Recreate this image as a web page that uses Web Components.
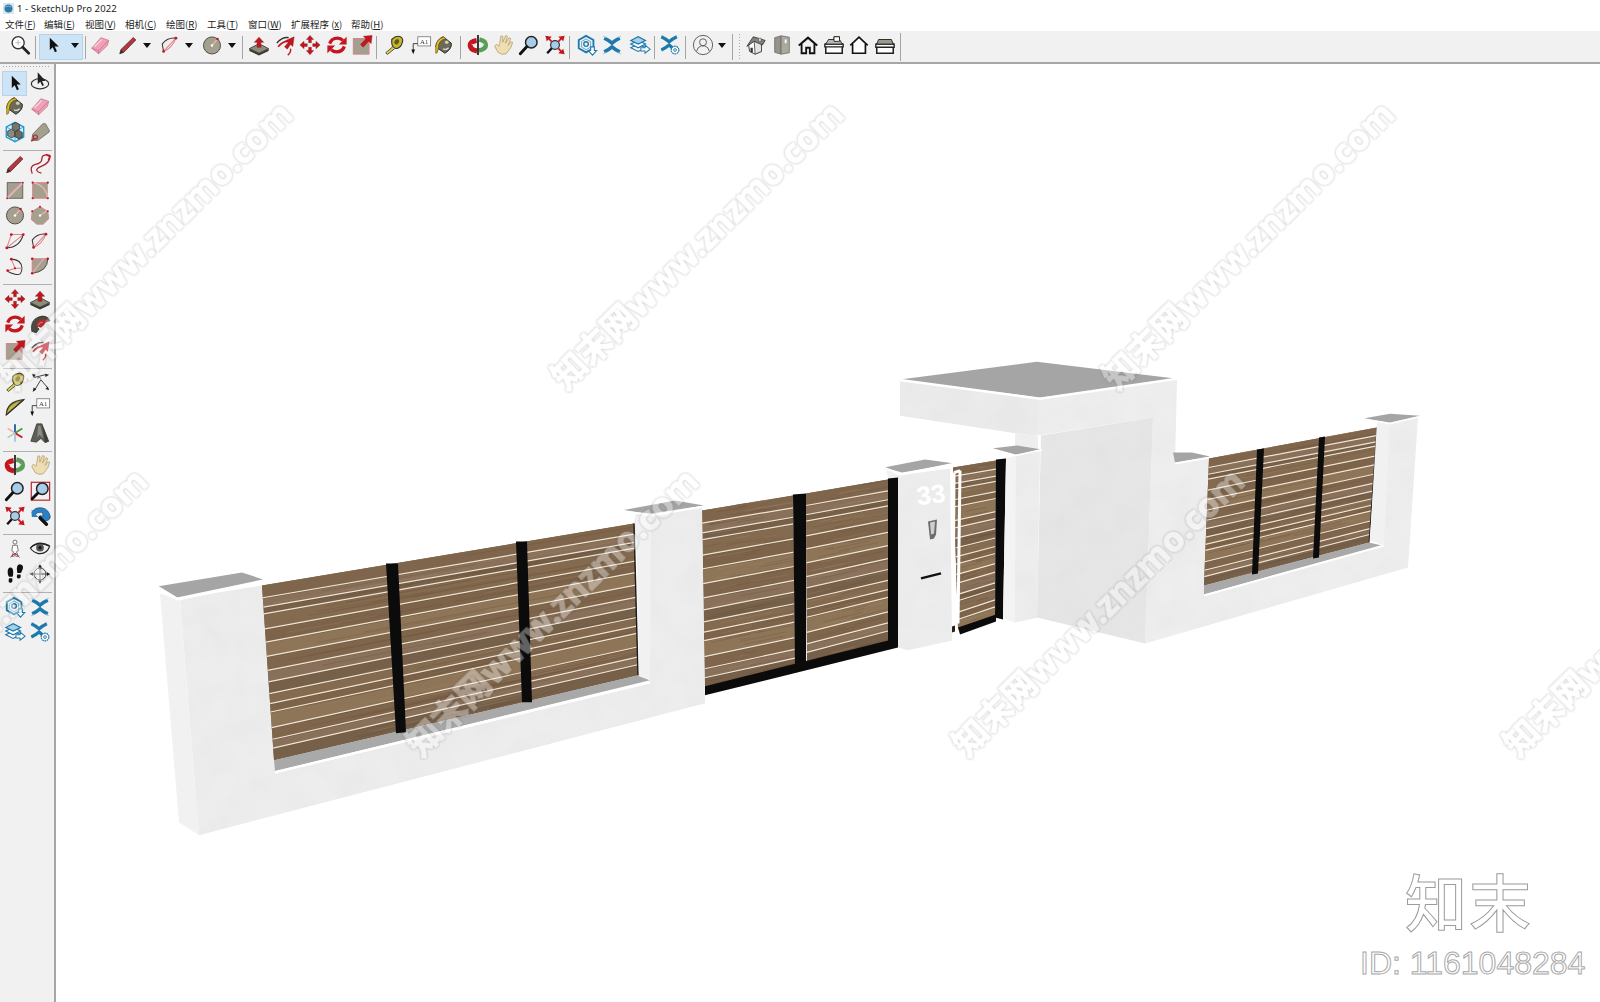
<!DOCTYPE html>
<html>
<head>
<meta charset="utf-8">
<title>1 - SketchUp Pro 2022</title>
<style>
  html, body { margin: 0; height: 100%; background: #fff; }
</style>
</head>
<body>
<su-app>
  <su-titlebar slot="title">1 - SketchUp Pro 2022</su-titlebar>
  <su-menubar slot="menu">
    <su-menu style="--w:39px">文件(<u>F</u>)</su-menu>
    <su-menu style="--w:41px">编辑(<u>E</u>)</su-menu>
    <su-menu style="--w:40px">视图(<u>V</u>)</su-menu>
    <su-menu style="--w:41px">相机(<u>C</u>)</su-menu>
    <su-menu style="--w:41px">绘图(<u>R</u>)</su-menu>
    <su-menu style="--w:41px">工具(<u>T</u>)</su-menu>
    <su-menu style="--w:43px">窗口(<u>W</u>)</su-menu>
    <su-menu style="--w:60px">扩展程序 (<u>x</u>)</su-menu>
    <su-menu>帮助(<u>H</u>)</su-menu>
  </su-menubar>
  <su-toolbar slot="tools">
    <su-tool icon="search" w="26"></su-tool>
    <su-sep></su-sep>
    <su-split style="margin-left:2px"><su-tool icon="select" w="27"></su-tool><su-drop w="17"></su-drop></su-split>
    <su-sep></su-sep>
    <su-tool icon="eraser" w="26"></su-tool>
    <su-tool icon="pencil" w="30"></su-tool><su-drop w="8"></su-drop>
    <su-tool icon="arc3" w="30" style="margin-left:4px"></su-tool><su-drop w="8"></su-drop>
    <su-tool icon="circle" w="30" style="margin-left:4px"></su-tool><su-drop w="8" style="margin-left:1px"></su-drop>
    <su-sep style="margin-left:4px"></su-sep>
    <su-tool icon="pushpull" w="26" style="margin-left:2px"></su-tool>
    <su-tool icon="followme" w="26"></su-tool>
    <su-tool icon="move" w="24"></su-tool>
    <su-tool icon="rotate" w="30"></su-tool>
    <su-tool icon="scale" w="20"></su-tool>
    <su-sep style="margin-left:2px"></su-sep>
    <su-tool icon="tape" w="28" style="margin-left:2px"></su-tool>
    <su-tool icon="text" w="26"></su-tool>
    <su-tool icon="paint" w="20"></su-tool>
    <su-sep style="margin-left:4px"></su-sep>
    <su-tool icon="orbit" w="26" style="margin-left:3px"></su-tool>
    <su-tool icon="pan" w="24"></su-tool>
    <su-tool icon="zoom" w="28"></su-tool>
    <su-tool icon="zoomext" w="24"></su-tool>
    <su-sep></su-sep>
    <su-tool icon="hexdown" w="26" style="margin-left:3px"></su-tool>
    <su-tool icon="chevrons" w="24"></su-tool>
    <su-tool icon="layers" w="24" style="margin-left:4px"></su-tool>
    <su-sep></su-sep>
    <su-tool icon="chevcog" w="26" style="margin-left:1px"></su-tool>
    <su-sep></su-sep>
    <su-tool icon="user" w="28" style="margin-left:2px"></su-tool><su-drop w="8" style="margin-left:1px"></su-drop>
    <su-sep style="margin-left:4px;--h:26px"></su-sep>
    <su-grip style="margin-left:5px"></su-grip>
    <su-tool icon="iso" w="26" style="margin-left:3px"></su-tool>
    <su-tool icon="door" w="26"></su-tool>
    <su-tool icon="home" w="26"></su-tool>
    <su-tool icon="top" w="25"></su-tool>
    <su-tool icon="front" w="26"></su-tool>
    <su-tool icon="back" w="26"></su-tool>
    <su-sep style="--h:28px"></su-sep>
  </su-toolbar>
  <su-palette slot="palette">
    <su-group>
      <su-tool icon="select" active></su-tool><su-tool icon="lasso"></su-tool>
      <su-tool icon="paint"></su-tool><su-tool icon="eraser"></su-tool>
      <su-tool icon="component"></su-tool><su-tool icon="tag"></su-tool>
    </su-group>
    <su-group>
      <su-tool icon="pencil"></su-tool><su-tool icon="freehand"></su-tool>
      <su-tool icon="rect"></su-tool><su-tool icon="rotrect"></su-tool>
      <su-tool icon="circle"></su-tool><su-tool icon="polygon"></su-tool>
      <su-tool icon="arc"></su-tool><su-tool icon="arc3"></su-tool>
      <su-tool icon="arc3b"></su-tool><su-tool icon="pie"></su-tool>
    </su-group>
    <su-group>
      <su-tool icon="move"></su-tool><su-tool icon="pushpull"></su-tool>
      <su-tool icon="rotate"></su-tool><su-tool icon="offset"></su-tool>
      <su-tool icon="scale"></su-tool><su-tool icon="followme"></su-tool>
    </su-group>
    <su-group>
      <su-tool icon="tape"></su-tool><su-tool icon="dimension"></su-tool>
      <su-tool icon="protractor"></su-tool><su-tool icon="text"></su-tool>
      <su-tool icon="axes"></su-tool><su-tool icon="text3d"></su-tool>
    </su-group>
    <su-group>
      <su-tool icon="orbit"></su-tool><su-tool icon="pan"></su-tool>
      <su-tool icon="zoom"></su-tool><su-tool icon="zoomwin"></su-tool>
      <su-tool icon="zoomext"></su-tool><su-tool icon="prev"></su-tool>
    </su-group>
    <su-group>
      <su-tool icon="person"></su-tool><su-tool icon="eye"></su-tool>
      <su-tool icon="feet"></su-tool><su-tool icon="cross"></su-tool>
    </su-group>
    <su-group last>
      <su-tool icon="hexdown"></su-tool><su-tool icon="chevrons"></su-tool>
      <su-tool icon="layers"></su-tool><su-tool icon="chevcog"></su-tool>
    </su-group>
  </su-palette>
  <su-scene slot="scene"></su-scene>
  <su-watermark slot="overlay"></su-watermark>
</su-app>

<script>
const RED = '#c4161f', DK = '#7d1f25', FACE = '#a5a08e', BLUE = '#1d78ab';
const ICONS = {
  search: `<circle cx="10" cy="9.5" r="6.6" fill="#fff" stroke="#333" stroke-width="1.5"/><path d="M7 9.5h6M10 6.5v6" stroke="#bbb"/><path d="M15 14.5l6.5 6.5" stroke="#222" stroke-width="3" stroke-linecap="round"/>`,
  select: `<path d="M8.5 4v13.5l3.2-3 2.4 5.3 2.2-1-2.4-5.2h4.4z" fill="#111"/>`,
  lasso: `<ellipse cx="12" cy="15" rx="9.5" ry="5.5" fill="none" stroke="#333" stroke-width="1.3"/><path d="M9.5 2.5v13l2.8-2.7 2.2 4.6 1.8-.9-2.1-4.5h3.8z" fill="#222"/>`,
  eraser: `<path d="M3 15.5L13 4l8.5 3-1.5 5.5-9.5 9z" fill="#f2a0b6" stroke="#b87388" stroke-width=".8"/><path d="M3 15.5l7.5 2.7 10.5-11" fill="none" stroke="#c97a92"/><path d="M10.5 18.2v3.3" stroke="#b87388"/><path d="M6 14l8-8" stroke="#f9cfd9" stroke-width="1.6"/>`,
  pencil: `<path d="M3 21.5l1.4-4.600L17.800 3.800l2.700 2.700L7.400 20z" fill="#b03a40" stroke="#5c1418" stroke-width=".8"/><path d="M3 21.5l1.4-4.600 3 3z" fill="#333"/>`,
  arc3: `<path d="M5 19L3.5 11Q9 3.5 18 4.5z" fill="#f5e4e4" fill-opacity=".6" stroke="none"/><path d="M5 19Q14 16 18.5 4.5" fill="none" stroke="#d9808a" stroke-width="1.1"/><path d="M5 19L3.5 11Q9 3.5 18.5 4.5" fill="none" stroke="#333" stroke-width="1.1"/><path d="M5 19L18.5 4.5" stroke="#d9808a" stroke-width="1.1"/><g fill="${RED}"><circle cx="5" cy="19" r="1.5"/><circle cx="18.5" cy="4.5" r="1.5"/></g>`,
  arc3b: `<path d="M8 4.5Q19 5 19.5 14T12 21 4 17" fill="none" stroke="#333" stroke-width="1.1"/><path d="M8 4.5l4 10-8 3M12 14.500l8 0" fill="none" stroke="#d9808a" stroke-width="1.1"/><g fill="${RED}"><circle cx="8" cy="4.500" r="1.500"/><circle cx="4" cy="17" r="1.500"/><circle cx="12" cy="14.500" r="1.200"/></g>`,
  arc: `<path d="M3 19.500Q17 19 21 5" fill="none" stroke="#333" stroke-width="1.200"/><path d="M3 19.500L8 5h13.500M3 19.500L21 5" fill="none" stroke="#d9808a" stroke-width="1.100"/><g fill="${RED}"><circle cx="3" cy="19.500" r="1.500"/><circle cx="8" cy="5" r="1.500"/><circle cx="21" cy="5" r="1.500"/></g>`,
  pie: `<path d="M3.500 20V4h17q0 14-17 16z" fill="${FACE}"/><path d="M3.500 20V4h17" fill="none" stroke="#d9808a" stroke-width="1.100"/><path d="M3.500 20q17-2 17-16" fill="none" stroke="#444" stroke-width="1"/><path d="M3.500 20L16 4" stroke="#e8a8ae" stroke-width="1.600"/><g fill="${RED}"><circle cx="3.500" cy="20" r="1.400"/><circle cx="20.500" cy="4" r="1.400"/><circle cx="3.500" cy="4" r="1.400"/></g>`,
  circle: `<circle cx="12" cy="12.500" r="9.300" fill="${FACE}" stroke="#444" stroke-width="1"/><path d="M12 12.500L18 5.500" stroke="#e9b3b7" stroke-width="1.500"/><circle cx="12" cy="12.500" r="1.300" fill="#fff"/><circle cx="18" cy="5.500" r="1.400" fill="${RED}"/>`,
  polygon: `<path d="M12 3l8.500 5 1 8-6 6h-7l-6-5 1-9z" fill="${FACE}" stroke="#c9888f" stroke-width="1"/><path d="M12 12.500L20 7" stroke="#e9b3b7" stroke-width="1.400"/><circle cx="12" cy="12.500" r="1.300" fill="#fff"/><g fill="${RED}"><circle cx="12" cy="3" r="1.100"/><circle cx="20.500" cy="8" r="1.100"/><circle cx="3.500" cy="8" r="1.100"/></g>`,
  rect: `<rect x="3.500" y="4" width="17" height="17" fill="${FACE}" stroke="#555" stroke-width=".9"/><path d="M3.500 21L20.500 4" stroke="#eab2b6" stroke-width="2"/><g fill="${RED}"><circle cx="3.500" cy="21" r="1"/><circle cx="20.500" cy="4" r="1"/></g>`,
  rotrect: `<rect x="4" y="4" width="16.500" height="17" fill="${FACE}"/><path d="M4 4v17h16.500M4 4h16.500" fill="none" stroke="#d9808a"/><path d="M4 4Q18 6 20.500 21" fill="none" stroke="#eab2b6" stroke-width="1.600"/><g fill="${RED}"><circle cx="4" cy="4" r="1.200"/><circle cx="20.500" cy="4" r="1.200"/><circle cx="4" cy="21" r="1.200"/><circle cx="20.500" cy="21" r="1.200"/></g>`,
  freehand: `<path d="M3.500 22.500Q0 14 7 12.500t7-6T19.500 2t3 4q-1 5-8 8t-6 5 5 3" fill="none" stroke="#a42732" stroke-width="1.400"/><path d="M18.500 1.500l4 2.500-1.500 3.500" fill="none" stroke="${RED}" stroke-width="1.300"/>`,
  pushpull: `<path d="M1.500 16l10.500-5.500L22.500 16 12 21z" fill="#8f8b78" stroke="#333" stroke-width=".9"/><path d="M1.500 16v2.500L12 23.500l10.500-5V16L12 21z" fill="#3a3a34"/><path d="M12 3.500l5 5.500h-3v5.500h-4V9H7z" fill="${RED}" stroke="#7a0f15" stroke-width=".5"/>`,
  followme: `<path d="M3 10Q9 3 16 4" fill="none" stroke="#333" stroke-width="1.500"/><path d="M4.500 14Q9 8 15 8" fill="none" stroke="${RED}" stroke-width="1.800"/><path d="M18 16q1 4-3 7" fill="none" stroke="${RED}" stroke-width="1.500"/><path d="M22 3l-1.500 10.500-2.500-2-3.500 5-3-2.500 4-4.800-2.700-2z" fill="${RED}" stroke="#7a0f15" stroke-width=".4"/>`,
  move: `<g fill="${RED}" stroke="#7a0f15" stroke-width=".4"><path d="M12 1.500l4 4.500h-2.500v3.500h-3V6H8z"/><path d="M12 22.500l4-4.500h-2.500v-3.500h-3V18H8z"/><path d="M1 12l4.500-4V10.500H9v3H5.500V16z"/><path d="M23 12l-4.500-4V10.500H15v3h3.500V16z"/></g>`,
  rotate: `<g fill="none" stroke="${RED}" stroke-width="3.600"><path d="M4 10.500Q6 4.500 12.500 4.500 16 4.500 18.500 7"/><path d="M20 13.500Q18 19.500 11.500 19.500 8 19.500 5.500 17"/></g><path d="M22.500 3v8.500h-8.500z" fill="${RED}"/><path d="M1.500 21v-8.500h8.500z" fill="${RED}"/>`,
  scale: `<rect x="2.500" y="5" width="17" height="17" fill="${FACE}" stroke="#c9888f"/><path d="M2.500 5h17v17" fill="none" stroke="#d9808a"/><path d="M23 1.500l-1 9-2.700-2.500-6 6.500-3-3 6-6.300-2.800-2.700z" fill="${RED}" stroke="#7a0f15" stroke-width=".4"/>`,
  tape: `<path d="M9.500 6q5-5 9.500-3t1 9q-3 5-7 3.500t-3.500-9.500z" fill="#c5b62a" stroke="#333" stroke-width="1.200"/><ellipse cx="15" cy="8.500" rx="2.300" ry="3.100" transform="rotate(35 15 8.500)" fill="#5f5a1a"/><path d="M10.500 14L3 20.500l1.800 1.800 7.500-6" fill="#e0d24a" stroke="#333" stroke-width=".9"/>`,
  text: `<rect x="8.500" y="3" width="14" height="10" fill="#fff" stroke="#777" stroke-width=".9"/><text x="15.500" y="11" font-family="Liberation Serif,serif" font-size="7.500" text-anchor="middle" fill="#333">A1</text><path d="M8.500 10.500H3.500v7" fill="none" stroke="#333"/><path d="M3.500 22L1.500 17h4z" fill="#111"/>`,
  text3d: `<path d="M8.500 2h5.500l7.500 19-4 1.500-4.500-4.500-5 4-6-1z" fill="#5e5e58" stroke="#2a2a2a" stroke-width=".7"/><path d="M10 4h2.500l3 14-4-4-2.500 3z" fill="#8c8c84"/><path d="M14 2l7.500 19-4 1.500z" fill="#3f3f3a"/>`,
  paint: `<path d="M3 14Q4 6 11 3l9 7q1 6-7 11z" fill="#6b6a58" stroke="#222" stroke-width="1"/><path d="M3 14q0-8 9-11l2 2q-8 2-8 9-1 8-3 7z" fill="#e2bd1f" stroke="#554812" stroke-width=".7"/><circle cx="15" cy="9" r="2" fill="#cfcbb5"/><path d="M11 16q3 2 6-1" stroke="#ddd" fill="none" stroke-width="1.300"/>`,
  orbit: `<path d="M10.500 7Q3.500 8 3.500 12.500t7.500 6" fill="none" stroke="${RED}" stroke-width="5.500"/><path d="M13.500 6Q20.500 7.500 20.500 12t-7.500 6" fill="none" stroke="#5a9d58" stroke-width="5"/><path d="M5 11q7 3.500 14 0" fill="none" stroke="#e8e8e8" stroke-width=".9"/><path d="M12 1v22" stroke="#111" stroke-width="1.800"/>`,
  pan: `<path d="M3 13.500l3.500 6.500q4 3.500 9 1.500l5-6.500 2-6-1.800-.5-3.200 4 3-7.500-1.900-1-3.800 6 2-7.500-2-.8-3 7.300 0-6.500-2-.5-1.500 8.500-.8 3-2.500-2.500z" fill="#efdeb4" stroke="#b5a273" stroke-width=".9"/>`,
  zoom: `<circle cx="14.500" cy="9" r="6.300" fill="#a8cbe8" stroke="#222" stroke-width="1.600"/><path d="M9.500 14l-7 7.500" stroke="#111" stroke-width="3.200" stroke-linecap="round"/>`,
  zoomwin: `<rect x="2.500" y="2.500" width="20" height="19.500" fill="none" stroke="#b8272f" stroke-width="1.300"/><circle cx="14.500" cy="9.500" r="6.300" fill="#a8cbe8" stroke="#222" stroke-width="1.600"/><path d="M9.500 14.500l-6 6" stroke="#111" stroke-width="3.200" stroke-linecap="round"/>`,
  zoomext: `<circle cx="12" cy="12" r="4.800" fill="#a8cbe8" stroke="#333" stroke-width="1.300"/><path d="M8.500 15.500l-5 5.500" stroke="#111" stroke-width="2.600"/><g fill="${RED}"><path d="M1.500 2l7 1-2 2 2.500 2.500-1.500 1.500L5 6 3 8z"/><path d="M22.500 2l-7 1 2 2-2.500 2.500 1.500 1.500L19 6l2 2z"/><path d="M22.500 22l-7-1 2-2-2.500-2.500 1.500-1.500L19 18l2-2z"/></g>`,
  prev: `<path d="M3 9Q5 3 12 3t10 6-2 8-7 0-2-4 5-1l-2-4q-5-.5-7 2z" fill="#2c7fc1" stroke="#17517e" stroke-width=".8"/><path d="M3 5v8h7z" fill="#2c7fc1"/><path d="M12 14l7 7" stroke="#111" stroke-width="3.600" stroke-linecap="round"/>`,
  hexdown: `<path d="M11 2l8 4.500v9L11 20l-8-4.500v-9z" fill="none" stroke="${BLUE}" stroke-width="2"/><path d="M11 5.500l5 2.800v6l-5 2.800-5-2.800v-6z" fill="none" stroke="#5aa4cc" stroke-width="1"/><circle cx="11" cy="11" r="2.500" fill="none" stroke="${BLUE}" stroke-width="1.500"/><path d="M16 14h4v4h2.500L18 23l-4.500-5H16z" fill="#fff" stroke="${BLUE}" stroke-width="1.200"/>`,
  chevrons: `<path d="M3.500 4.500Q8 6.500 12 10q4-3.500 8.500-5.500M3.500 19.500Q8 17.500 12 14q4 3.500 8.500 5.500" fill="none" stroke="${BLUE}" stroke-width="3.800"/><path d="M2.500 2.500l3 1.500M21.500 2.500l-3 1.500M2.500 21.500l3-1.500M21.500 21.500l-3-1.500" stroke="#8cc0dc" stroke-width="1"/>`,
  layers: `<g fill="#fff" stroke="${BLUE}" stroke-width="1.300"><path d="M2 15l8-4 8 4-8 4z"/><path d="M2 11l8-4 8 4-8 4z"/><path d="M2 7l8-4 8 4-8 4z" fill="#a8d0e6"/></g><path d="M13 15h4.500v-3l5.500 4.500L17.500 21v-2.500H13z" fill="#fff" stroke="${BLUE}" stroke-width="1.100"/>`,
  chevcog: `<path d="M2.500 3Q7 5 11 8.500 15 5 19.500 3M2.500 17.500Q7 15.500 11 12q4 3.500 6 4.500" fill="none" stroke="${BLUE}" stroke-width="3.400"/><circle cx="17.500" cy="17.500" r="4.200" fill="#fff" stroke="${BLUE}" stroke-width="1.300" stroke-dasharray="2 .6"/><circle cx="17.500" cy="17.500" r="1.500" fill="none" stroke="${BLUE}"/>`,
  user: `<circle cx="12" cy="12" r="10.500" fill="none" stroke="#555" stroke-width="1"/><circle cx="12" cy="9" r="3.800" fill="none" stroke="#555" stroke-width="1"/><path d="M5 19q1-5 5-6h4q4 1 5 6" fill="none" stroke="#555" stroke-width="1"/>`,
  iso: `<path d="M4 12l6-5 8 1.500V19l-7 3-6-3z" fill="#fff" stroke="#333" stroke-width="1"/><path d="M10 7l8 1.500V19l-7 3z" fill="#e4e4e0" stroke="#333" stroke-width=".8"/><path d="M2 13.500L9 3l13 4-3 5-9-4z" fill="#84817a" stroke="#333" stroke-width=".9"/><path d="M15 4.500h2.500V8H15z" fill="#f3f3f3" stroke="#444" stroke-width=".6"/><path d="M6 15h2.500v5.500L6 19.500z" fill="#333"/>`,
  door: `<path d="M4 4l7-2v20l-7-2z" fill="#96938a" stroke="#666" stroke-width=".8"/><path d="M11 2l9 1.500v17L11 22z" fill="#aba89e" stroke="#666" stroke-width=".8"/><path d="M15 6h2v4h-2z" fill="#fff"/>`,
  home: `<path d="M2 12.500L12 4l10 8.500" fill="none" stroke="#111" stroke-width="2.200"/><path d="M5 11v10h5v-6h4v6h5V11" fill="none" stroke="#111" stroke-width="2"/>`,
  top: `<path d="M3 11h18v10H3z" fill="#fff" stroke="#222" stroke-width="1.700"/><path d="M2 11h20v3H2z" fill="#fff" stroke="#222" stroke-width="1.500"/><path d="M3 11l3-5h6V3h6v3l3 5z" fill="#bcb9ae" stroke="#222" stroke-width="1"/><path d="M12 3h6v5h-6z" fill="#fff" stroke="#222"/>`,
  front: `<path d="M2.500 12.500L12 3.500l9.500 9" fill="#fff" stroke="#111" stroke-width="1.800"/><path d="M5 11v10h14V11" fill="#fff" stroke="#111" stroke-width="1.800"/>`,
  back: `<path d="M3 11h18v10H3z" fill="#fff" stroke="#222" stroke-width="1.700"/><path d="M2 11h20v3.500H2z" fill="#fff" stroke="#222" stroke-width="1.500"/><path d="M3 11l2-5h14l2 5z" fill="#9c998d" stroke="#222" stroke-width="1"/>`,
  component: `<path d="M12 1.500l9.500 5v11l-9.500 5-9.500-5v-11z" fill="#d7eef8" stroke="#1c9bd3" stroke-width="1.500"/><path d="M2.500 6.500l9.500 5 9.500-5M12 11.500v11" stroke="#1c9bd3" fill="none" stroke-width=".8"/><g stroke="#222" stroke-width=".7"><path d="M9 3.500l4-2 4 2.500v5l-4 2-4-2.500z" fill="#77776c"/><path d="M4 11l4-2 4 2.500v5l-4 2-4-2.500z" fill="#8b8a7c"/><path d="M12 12l4-2 4 2.500v5l-4 2-4-2.500z" fill="#6a6a60"/></g>`,
  tag: `<path d="M3 21.500l1-7L15 3h3l4 7v2L10 21z" fill="${FACE}" stroke="#6b6859" stroke-width=".9"/><circle cx="7" cy="17.500" r="2.200" fill="none" stroke="#a42732" stroke-width="1.300"/><path d="M2.500 22l3-3" stroke="#a42732" stroke-width="1.500"/>`,
  offset: `<path d="M3 20Q1 8 10 4.500t13 4l-5 1.500q-3-2-6-.5t-3 6l2 2-3 4z" fill="#4a4a40" stroke="#222" stroke-width=".8"/><path d="M8 14q0-6 6-7 4-.5 7 1.500l-3 1.500-1.500 3-3.500 3-3-1z" fill="#b32a30"/><path d="M10 13.500q1-3.500 5-3.500" stroke="#e0868b" fill="none" stroke-width="1"/>`,
  dimension: `<path d="M6 7l12-3M6 21L13 9.500M13 9.500L20 18" stroke="#333" fill="none" stroke-width="1"/><g fill="#222"><path d="M3 3l4 1-1.500 3.500z"/><path d="M22 4l-4 2.500-.5-3.500z"/><path d="M4 23l1-5 3 2z"/><path d="M22 21l-4-1.500 2.500-2.500z"/></g><path d="M9 8q2-2 4 0" stroke="#555" fill="none"/>`,
  protractor: `<path d="M2.500 20.500Q3 6 21.500 4z" fill="#a9a43a" stroke="#333" stroke-width="1.300"/><path d="M2.500 20.500Q6 9 17 7z" fill="#c6bf46" stroke="none"/><path d="M2.500 20.500L21.500 4" stroke="#333" stroke-width="1.400"/>`,
  axes: `<path d="M12 12V2.500" stroke="#1d5fa8" stroke-width="2"/><path d="M12 12l8-5" stroke="#3da142" stroke-width="2"/><path d="M12 12l8 5" stroke="${RED}" stroke-width="2"/><path d="M12 12v9.500" stroke="#8fb4d8" stroke-width="1.500"/><path d="M12 12L4 17" stroke="#a2cfa4" stroke-width="1.500"/><path d="M12 12L4 7" stroke="#e8a8ae" stroke-width="1.500"/>`,
  person: `<circle cx="12" cy="4.500" r="2.200" fill="#fff" stroke="#666"/><path d="M9.500 8h5l1 6-2 1 2 5h-2.500L12 16.500 11 20H8.500l2-5-2-1z" fill="#fff" stroke="#666" stroke-width=".9"/><path d="M7 21l5-4.500 5 4.500" fill="none" stroke="#c4161f" stroke-width="1"/>`,
  eye: `<path d="M1.500 11Q10 2 22.500 9q-3 9-12 8-6-1-9-6z" fill="#eee" stroke="#222" stroke-width="1.200"/><path d="M1.500 10Q10 1 23 8l-2 1Q11 4 2 11z" fill="#222"/><circle cx="12" cy="10.500" r="4.200" fill="#555"/><circle cx="12" cy="10.500" r="1.700" fill="#111"/>`,
  feet: `<path d="M4 10q0-5 3-5t3 5-1 5H5.500Q4 13 4 10z" fill="#111"/><path d="M5.500 16.500H9q1 5-2 5t-1.500-5z" fill="#111"/><path d="M14 6q.5-5 4-4.500t2.500 5L18.500 11H14.500z" fill="#111"/><path d="M14.500 12.500H18q1 4.500-2 4.500t-1.500-4.500z" fill="#111"/>`,
  cross: `<circle cx="12" cy="12" r="6.500" fill="none" stroke="#333"/><path d="M1 12h22M12 2v20" stroke="#444"/><g fill="#111"><path d="M1 12l3.500-2.200v4.400z"/><path d="M23 12l-3.500-2.200v4.400z"/><path d="M12 1.500l-2.200 3.500h4.400z"/><path d="M12 22.500l-2.200-3.500h4.400z"/></g>`
};

class SuApp extends HTMLElement {
  constructor() {
    super();
    this.attachShadow({mode: 'open'});
    this.shadowRoot.innerHTML = `
      <style>
        :host { display: block; position: relative; width: 100%; height: 100vh; overflow: hidden; background: #fff; font-family: "Noto Sans", "Noto Sans CJK SC", sans-serif; }
        .page { display: flex; flex-direction: column; height: 100%; }
        .main { flex: 1; display: flex; min-height: 0; }
      </style>
      <div class="page">
        <slot name="title"></slot>
        <slot name="menu"></slot>
        <slot name="tools"></slot>
        <div class="main">
          <slot name="palette"></slot>
          <slot name="scene"></slot>
        </div>
      </div>
      <slot name="overlay"></slot>
    `;
  }
}

class SuTitlebar extends HTMLElement {
  constructor() {
    super();
    this.attachShadow({mode: 'open'});
    this.shadowRoot.innerHTML = `
      <style>
        :host { display: flex; align-items: center; gap: 3px; height: 17px; padding-left: 3px; background: #fff; font: 9.5px "Noto Sans", sans-serif; letter-spacing: .1px; color: #222; }
        svg { width: 11px; height: 11px; }
      </style>
      <svg viewBox="0 0 11 11"><rect width="11" height="11" fill="#d8e6ef"/><circle cx="5.5" cy="5.5" r="4" fill="#2a7aa8"/><path d="M2.500 4q3-2 6 0" stroke="#7fb7d6" fill="none"/></svg>
      <slot></slot>
    `;
  }
}

class SuMenubar extends HTMLElement {
  constructor() {
    super();
    this.attachShadow({mode: 'open'});
    this.shadowRoot.innerHTML = `
      <style>
        :host { display: flex; align-items: center; height: 14px; padding-left: 5px; background: #fff; }
      </style>
      <slot></slot>
    `;
  }
}

class SuMenu extends HTMLElement {
  constructor() {
    super();
    this.attachShadow({mode: 'open'});
    this.shadowRoot.innerHTML = `
      <style>
        :host { display: block; width: var(--w, auto); white-space: nowrap; font: 9.5px "Noto Sans CJK SC", "Noto Sans", sans-serif; color: #222; }
      </style>
      <slot></slot>
    `;
  }
}

class SuToolbar extends HTMLElement {
  constructor() {
    super();
    this.attachShadow({mode: 'open'});
    this.shadowRoot.innerHTML = `
      <style>
        :host { display: flex; align-items: center; box-sizing: border-box; height: 33px; padding: 1px 0 0 7px; background: #f1f1f1; border-bottom: 2px solid #a6a6a6; }
      </style>
      <slot></slot>
    `;
  }
}

class SuTool extends HTMLElement {
  constructor() {
    super();
    this.attachShadow({mode: 'open'});
    const w = this.getAttribute('w');
    const name = this.getAttribute('icon');
    const active = this.hasAttribute('active');
    this.shadowRoot.innerHTML = `
      <style>
        :host { display: flex; align-items: center; justify-content: center; flex: none; width: ${w ? w + 'px' : '100%'}; height: ${w ? '26px' : '100%'}; }
        .on { display: flex; align-items: center; justify-content: center; width: 25px; height: 25px; box-sizing: border-box; background: #cde4f7; border: 1px solid #b4d3ec; }
        svg { width: 22px; height: 22px; overflow: visible; filter: blur(.3px); }
      </style>
      <div class="${active ? 'on' : ''}"><svg viewBox="0 0 24 24">${ICONS[name] || ''}</svg></div>
    `;
  }
}

class SuDrop extends HTMLElement {
  constructor() {
    super();
    this.attachShadow({mode: 'open'});
    const w = this.getAttribute('w') || 8;
    this.shadowRoot.innerHTML = `
      <style>
        :host { display: flex; align-items: center; justify-content: center; flex: none; width: ${w}px; height: 26px; }
        i { width: 0; height: 0; border: 4px solid transparent; border-top: 5px solid #111; border-bottom: 0; margin-top: -3px; }
      </style>
      <i></i>
    `;
  }
}

class SuSplit extends HTMLElement {
  constructor() {
    super();
    this.attachShadow({mode: 'open'});
    this.shadowRoot.innerHTML = `
      <style>
        :host { display: flex; flex: none; width: 44px; height: 26px; box-sizing: border-box; background: #cde4f7; border: 1px solid #b4d3ec; align-items: center; justify-content: flex-start; }
        ::slotted(su-tool) { margin-left: -1px; }
      </style>
      <slot></slot>
    `;
  }
}

class SuSep extends HTMLElement {
  constructor() {
    super();
    this.attachShadow({mode: 'open'});
    this.shadowRoot.innerHTML = `
      <style>
        :host { display: flex; justify-content: center; flex: none; width: 4px; }
        i { width: 1px; height: var(--h, 23px); background: #a4a4a4; }
      </style>
      <i></i>
    `;
  }
}

class SuGrip extends HTMLElement {
  constructor() {
    super();
    this.attachShadow({mode: 'open'});
    this.shadowRoot.innerHTML = `
      <style>
        :host { display: block; flex: none; width: 1px; height: 26px; background: repeating-linear-gradient(to bottom, #aaa 0 1px, transparent 1px 3px); }
      </style>
    `;
  }
}

class SuPalette extends HTMLElement {
  constructor() {
    super();
    this.attachShadow({mode: 'open'});
    this.shadowRoot.innerHTML = `
      <style>
        :host { display: flex; flex-direction: column; flex: none; box-sizing: border-box; width: 56px; padding: 6.5px 3px 0 2px; background: #f1f1f1; border-right: 2px solid #a6a6a6; position: relative; }
        .grip { position: absolute; left: 3px; right: 4px; top: 2px; height: 1px; background: repeating-linear-gradient(to right, #aaa 0 1px, transparent 1px 3px); }
      </style>
      <div class="grip"></div>
      <slot></slot>
    `;
  }
}

class SuGroup extends HTMLElement {
  constructor() {
    super();
    this.attachShadow({mode: 'open'});
    this.shadowRoot.innerHTML = `
      <style>
        :host { display: grid; grid-template-columns: 25px 25px; grid-auto-rows: 25.5px; padding-bottom: 6.9px; position: relative; }
        .rule { position: absolute; left: 1px; right: -1px; bottom: 3px; height: 1px; background: #b0b0b0; }
        :host([last]) .rule { display: none; }
      </style>
      <slot></slot>
      <div class="rule"></div>
    `;
  }
}

class SuScene extends HTMLElement {
  constructor() {
    super();
    this.attachShadow({mode: 'open'});
    this.seed = 7;
    this.shadowRoot.innerHTML = `
      <style>
        :host { display: block; flex: 1; min-width: 0; background: #fff; }
        svg { display: block; width: 100%; height: 100%; }
        text { font-family: "Liberation Sans", sans-serif; font-weight: 700; }
      </style>
      <svg viewBox="56 63 1544 939" preserveAspectRatio="none">
        <defs>
          <filter id="plaster" x="0" y="0" width="100%" height="100%">
            <feTurbulence type="fractalNoise" baseFrequency=".035" numOctaves="3" seed="4"/>
            <feColorMatrix values="0 0 0 0 .5  0 0 0 0 .5  0 0 0 0 .5  .16 0 0 0 -.05"/>
            <feComposite in2="SourceGraphic" operator="in"/>
            <feMerge><feMergeNode in="SourceGraphic"/><feMergeNode/></feMerge>
          </filter>
        </defs>
        ${this.build()}
      </svg>
    `;
  }

  rnd() {
    this.seed = (this.seed * 16807) % 2147483647;
    return this.seed / 2147483647;
  }

  poly(pts, fill, extra = '') {
    return `<polygon points="${pts.map(p => p.join(',')).join(' ')}" fill="${fill}" ${extra}/>`;
  }

  plaster(pts, fill) {
    return this.poly(pts, fill, 'filter="url(#plaster)"');
  }

  line(a, b, color, w) {
    return `<line x1="${a[0]}" y1="${a[1]}" x2="${b[0]}" y2="${b[1]}" stroke="${color}" stroke-width="${w}"/>`;
  }

  // wood boards with pale gaps, mapped on a four-point quad
  wood(q, gaps) {
    const at = (u, v) => {
      const top = [q[0][0] + (q[1][0] - q[0][0]) * u, q[0][1] + (q[1][1] - q[0][1]) * u];
      const bot = [q[3][0] + (q[2][0] - q[3][0]) * u, q[3][1] + (q[2][1] - q[3][1]) * u];
      return [+(top[0] + (bot[0] - top[0]) * v).toFixed(1), +(top[1] + (bot[1] - top[1]) * v).toFixed(1)];
    };
    const tones = ['#7f654b', '#89705a', '#76604a', '#846b50', '#7c634a', '#8e7558'];
    let out = this.poly(q, '#82684d');
    const stops = [0, ...gaps, 1];
    for (let i = 0; i < stops.length - 1; i++) {
      out += this.poly([at(0, stops[i]), at(1, stops[i]), at(1, stops[i + 1]), at(0, stops[i + 1])], tones[i % tones.length]);
    }
    for (let i = 0; i < 90; i++) {
      const v = this.rnd(), u0 = this.rnd() * .7, u1 = u0 + .1 + this.rnd() * .5;
      const dark = this.rnd() > .45;
      out += this.line(at(u0, v), at(Math.min(u1, 1), v), dark ? '#654c37' : '#a58a6a', .6).replace('/>', ' opacity=".45"/>');
    }
    gaps.forEach(v => {
      out += this.line(at(0, v + .004), at(1, v + .004), '#5c4531', .8).replace('/>', ' opacity=".5"/>');
      out += this.line(at(0, v), at(1, v), '#f1e6d4', 1.2);
    });
    return out;
  }

  build() {
    const G = [.07, .124, .162, .248, .324, .406, .486, .552, .619, .676, .724, .813, .88, .93];
    const G2 = [.055, .1, .135, .2, .245, .33, .375, .44, .5, .555, .6, .665, .72, .79, .83, .9, .945];
    const WALL = '#ededed', SIDE = '#f1f1f1', CAP = '#a5a5a5', LEDGE = '#a9a9a9', LIP = '#ffffff', BK = '#0b0b0b';
    let s = '<g>';

    // tower and canopy
    s += this.plaster([[1015, 433], [1038, 435], [1037, 617], [1015, 622]], '#f0f0f0');
    s += this.plaster([[900, 380], [1038, 397], [1038, 435], [1017, 433], [900, 415]], '#ebebeb');
    s += this.plaster([[1038, 397], [1177, 378], [1175, 464], [1209, 458], [1204, 595], [1384, 545], [1377, 427], [1390, 422], [1418, 417], [1408, 567], [1145, 643], [1153, 417], [1038, 435]], '#eeeeee');
    s += this.plaster([[1041, 435], [1153, 417], [1145, 643], [1037, 617]], '#e6e6e6');
    s += this.poly([[898, 379], [1037, 361], [1177, 378], [1040, 397]], CAP);
    s += `<polyline points="898,379 1040,398 1177,378" fill="none" stroke="${LIP}" stroke-width="2.500"/>`;

    // right wall
    s += this.poly([[1173, 452], [1192, 452], [1210, 456], [1175, 462]], CAP);
    s += this.line([1175, 463], [1210, 457], LIP, 1.5);
    s += this.wood([[1209, 458], [1377, 427], [1369, 542], [1204, 585]], G);
    s += this.poly([[1204, 585], [1369, 542], [1382, 545], [1204, 594]], LEDGE);
    s += this.line([1204, 595], [1384, 545], LIP, 2);
    s += this.line([1377, 427], [1369, 542], '#2a2a2a', 1);
    s += this.poly([[1377, 420], [1390, 422], [1384, 545], [1370, 540]], SIDE);
    s += this.poly([[1257, 449], [1264, 448], [1258, 573], [1252, 574]], BK);
    s += this.poly([[1319, 437], [1325, 436], [1319, 557], [1313, 558]], BK);
    s += this.poly([[1363, 418], [1390, 413], [1420, 415], [1390, 422]], CAP);
    s += `<polyline points="1363,418 1390,423 1420,416" fill="none" stroke="${LIP}" stroke-width="1.500"/>`;

    // small gate and its pillar
    s += this.wood([[953, 467], [996, 460], [995, 615], [958, 628]], G2);
    s += this.poly([[996, 459], [1006, 458], [1003, 619], [995, 617]], BK);
    s += this.poly([[958, 627], [996, 614], [996, 621], [960, 634]], BK);
    s += this.poly([[1006, 458], [1016, 455], [1015, 622], [1003, 618]], '#f3f3f3');
    s += this.plaster([[1016, 455], [1040, 451], [1037, 617], [1015, 622]], WALL);
    s += this.poly([[991, 448], [1017, 445], [1042, 449], [1015, 454]], CAP);
    s += `<polyline points="991,448 1016,455 1042,449" fill="none" stroke="${LIP}" stroke-width="1.500"/>`;
    s += this.line([954, 472], [953, 627], LIP, 3);
    s += this.line([960, 470], [958, 623], LIP, 3);
    s += this.line([954, 472], [960, 470], LIP, 3);
    s += this.poly([[952, 626], [955, 625], [955, 631], [952, 632]], '#222');

    // double gate
    s += this.wood([[702, 510], [793, 495], [795, 670], [705, 690]], G);
    s += this.wood([[806, 493], [888, 479], [888, 642], [807, 664]], G);
    s += this.poly([[705, 686], [888, 640], [898, 647], [705, 695]], BK);
    s += this.poly([[793, 494], [806, 493], [806, 667], [795, 670]], BK);
    s += this.poly([[888, 477], [898, 476], [898, 647], [888, 643]], BK);

    // pillar with the number
    s += this.poly([[886, 467], [898, 475], [898, 477], [888, 478]], SIDE);
    s += this.plaster([[898, 475], [950, 468], [952, 640], [908, 650], [898, 647]], WALL);
    s += this.poly([[884, 467], [925, 459], [955, 463], [902, 472]], CAP);
    s += `<polyline points="884,467 901,474 955,463" fill="none" stroke="${LIP}" stroke-width="2"/>`;
    s += `<text text-anchor="middle" font-size="26" fill="#fff" transform="translate(932 503) rotate(-7)">33</text>`;
    s += this.poly([[928, 521], [937, 519], [936, 534], [934, 538], [930, 539]], '#6d6d6d');
    s += this.poly([[930, 522], [935, 521], [934, 533], [931, 534]], '#cfcfcf');
    s += this.line([921, 578], [941, 573], '#111', 2.4);

    // left wall
    s += this.poly([[160, 593], [180, 600], [199, 835], [179, 822]], SIDE);
    s += this.plaster([[180, 598], [262, 585], [275, 772], [650, 682], [634, 523], [636, 513], [702, 507], [705, 703], [199, 835]], WALL);
    s += this.wood([[262, 585], [634, 523], [638, 675], [274, 760]], G);
    s += this.poly([[274, 760], [638, 675], [650, 680], [275, 771]], LEDGE);
    s += this.line([275, 772], [650, 682], LIP, 2.5);
    s += this.line([634, 523], [638, 675], '#1c1c1c', 1.4);
    s += this.poly([[636, 516], [651, 513], [650, 680], [639, 676]], SIDE);
    s += this.poly([[386, 563], [398, 563], [406, 732], [396, 733]], BK);
    s += this.poly([[516, 541], [527, 541], [532, 702], [522, 702]], BK);
    s += this.poly([[157, 586], [242, 572], [263, 579], [177, 597]], CAP);
    s += `<polyline points="157,586 178,599 263,581" fill="none" stroke="${LIP}" stroke-width="2.500"/>`;
    s += this.poly([[621, 510], [675, 500], [704, 505], [651, 513]], CAP);
    s += `<polyline points="621,510 651,515 704,506" fill="none" stroke="${LIP}" stroke-width="2"/>`;

    return s + '</g>';
  }
}

class SuWatermark extends HTMLElement {
  constructor() {
    super();
    this.attachShadow({mode: 'open'});
    const spots = [[6, 382], [557, 382], [1108, 382], [-139, 749], [412, 749], [958, 749], [1509, 749]];
    const marks = spots.map(([x, y]) =>
      `<text class="mark" x="${x}" y="${y}" textLength="392" lengthAdjust="spacing" transform="rotate(-44.5 ${x} ${y})">知末网www.znzmo.com</text>`
    ).join('');
    this.shadowRoot.innerHTML = `
      <style>
        :host { position: absolute; inset: 0; display: block; pointer-events: none; }
        svg { display: block; width: 100%; height: 100%; }
        .marks { opacity: .36; filter: drop-shadow(0 0 1px rgba(60, 60, 60, 1)); }
        .mark { font: 700 34px "Noto Sans", "Noto Sans CJK SC", sans-serif; fill: #fff; stroke: #fff; stroke-width: 1.4px; dominant-baseline: central; }
        .logo { font: 500 62px "Noto Sans CJK SC", sans-serif; fill: #fff; stroke: #9c9c9c; stroke-width: 1px; }
        .id { font: 400 32px "Liberation Sans", sans-serif; fill: #fff; stroke: #a8a8a8; stroke-width: 1px; }
      </style>
      <svg viewBox="0 0 1600 1002">
        <g class="marks">${marks}</g>
        <text class="logo" x="1405" y="927" textLength="126">知末</text>
        <text class="id" x="1360" y="974">ID: 1161048284</text>
      </svg>
    `;
  }
}

customElements.define('su-app', SuApp);
customElements.define('su-titlebar', SuTitlebar);
customElements.define('su-menubar', SuMenubar);
customElements.define('su-menu', SuMenu);
customElements.define('su-toolbar', SuToolbar);
customElements.define('su-tool', SuTool);
customElements.define('su-drop', SuDrop);
customElements.define('su-split', SuSplit);
customElements.define('su-sep', SuSep);
customElements.define('su-grip', SuGrip);
customElements.define('su-palette', SuPalette);
customElements.define('su-group', SuGroup);
customElements.define('su-scene', SuScene);
customElements.define('su-watermark', SuWatermark);
</script>
</body>
</html>
